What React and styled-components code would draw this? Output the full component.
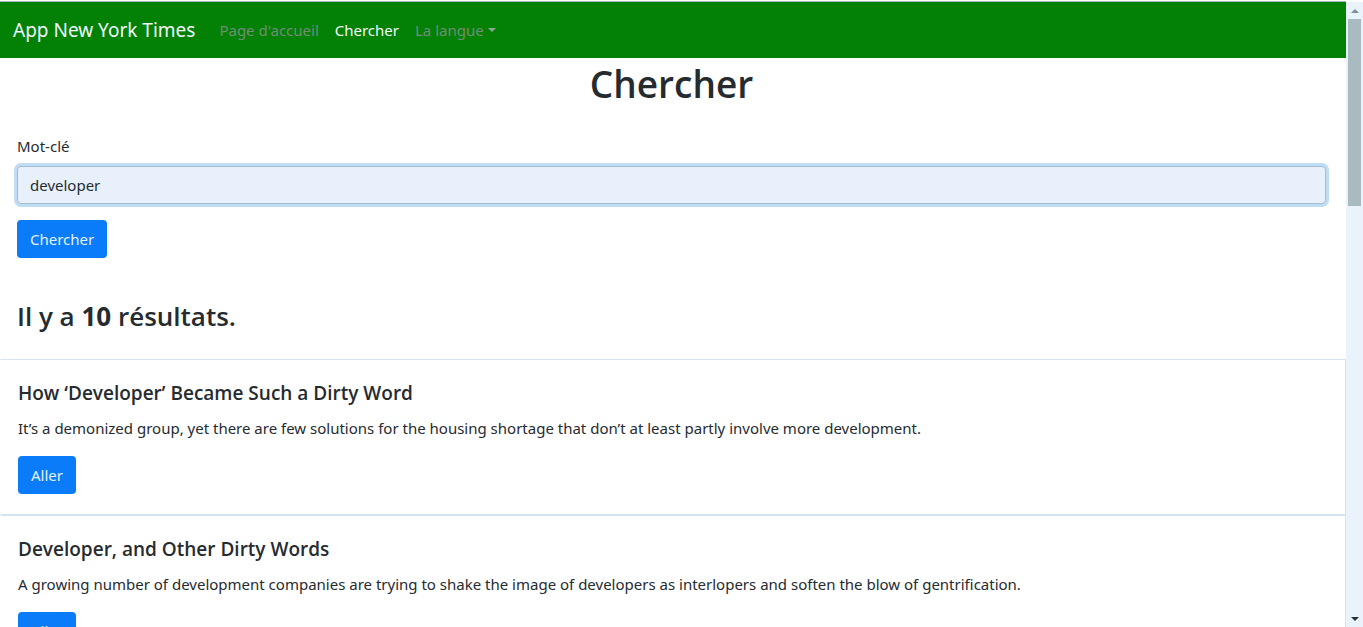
import React from "react";
import styled, { createGlobalStyle } from "styled-components";

const GlobalStyle = createGlobalStyle`
  *, *::before, *::after { box-sizing: border-box; }
  body {
    margin: 0;
    background: #fff;
    color: #262b2f;
    font-family: "Noto Sans", "Open Sans", sans-serif;
    font-size: 15px;
    line-height: 24px;
  }
  h1, h2, h3, p, ul { margin: 0; padding: 0; }
  h1, h2, h3 {
    font-family: "Open Sans", "Noto Sans", sans-serif;
    font-weight: 600;
  }
`;

const Shell = styled.div`
  display: grid;
  grid-template-columns: minmax(0, 1fr) 17px;
  height: 100vh;
  overflow: hidden;
  padding-top: 1px;
`;

const Page = styled.div`
  min-width: 0;
  overflow: hidden;
  border-top: 1px solid #a9b9bd;
`;

const Navbar = styled.nav`
  display: flex;
  align-items: center;
  height: 56px;
  padding: 0 13px;
  background: #028105;
`;

const Brand = styled.a`
  margin-right: 16px;
  color: #f0f6fb;
  font-size: 19px;
  line-height: 30px;
  text-decoration: none;
`;

const NavList = styled.ul`
  display: flex;
  list-style: none;
`;

const NavLink = styled.a`
  display: flex;
  align-items: center;
  padding: 8px;
  color: ${(p) => (p.$active ? "#f4f9fc" : "#728c76")};
  text-decoration: none;
`;

const Caret = styled.span`
  margin-left: 4px;
  border-top: 4px solid #8fa595;
  border-left: 4px solid transparent;
  border-right: 4px solid transparent;
`;

const Search = styled.section`
  padding: 0 20px 0 17px;
`;

const PageTitle = styled.h1`
  margin-bottom: 24px;
  font-size: 37px;
  line-height: 52px;
  text-align: center;
`;

const Form = styled.form`
  display: flex;
  flex-direction: column;
  align-items: flex-start;
`;

const Label = styled.label`
  margin-bottom: 8px;
`;

const TextInput = styled.input`
  width: 100%;
  height: 38px;
  margin-bottom: 16px;
  padding: 6px 12px;
  border: 1px solid #a5bccb;
  border-radius: 4px;
  outline: none;
  background: #e8f1fb;
  box-shadow: 0 0 0 3px #c0ddf6;
  color: inherit;
  font: inherit;
`;

const Button = styled.button`
  height: 38px;
  padding: 0 13px;
  border: 0;
  border-radius: 4px;
  background: #0a7cf9;
  color: #e4f1fd;
  font: inherit;
  cursor: pointer;
`;

const ResultCount = styled.h2`
  margin: 41px 0 26px;
  font-size: 26px;
  line-height: 34px;

  strong { font-weight: 700; }
`;

const Card = styled.article`
  display: flex;
  flex-direction: column;
  align-items: flex-start;
  padding: 20px 17px;
  border: 1px solid #d5e4f1;
  border-left-color: #fff;
`;

const CardTitle = styled.h3`
  margin-bottom: 10px;
  font-size: 19px;
  line-height: 26px;
`;

const CardText = styled.p`
  margin-bottom: 16px;
`;

const Scrollbar = styled.div`
  display: flex;
  flex-direction: column;
  align-items: center;
  margin-top: 1px;
  background: #eaf2fb;
`;

const Arrow = styled.span`
  display: flex;
  align-items: center;
  justify-content: center;
  flex: none;
  width: 17px;
  height: 17px;

  &::before {
    content: "";
    border-left: 4px solid transparent;
    border-right: 4px solid transparent;
    ${(p) => (p.$up ? "border-bottom: 4px solid #7f9190;" : "border-top: 4px solid #2b3133;")}
  }
`;

const Track = styled.div`
  display: grid;
  grid-template-rows: 6fr 13fr;
  flex: 1;
  width: 13px;
`;

const Thumb = styled.div`
  background: #a9bbc1;
`;

const articles = [
  {
    title: "How ‘Developer’ Became Such a Dirty Word",
    text: "It’s a demonized group, yet there are few solutions for the housing shortage that don’t at least partly involve more development.",
  },
  {
    title: "Developer, and Other Dirty Words",
    text: "A growing number of development companies are trying to shake the image of developers as interlopers and soften the blow of gentrification.",
  },
];

export default function App() {
  return (
    <Shell>
      <GlobalStyle />
      <Page>
        <Navbar>
          <Brand href="#">App New York Times</Brand>
          <NavList>
            <li><NavLink href="#accueil">Page d'accueil</NavLink></li>
            <li><NavLink href="#chercher" $active>Chercher</NavLink></li>
            <li><NavLink href="#langue">La langue<Caret /></NavLink></li>
          </NavList>
        </Navbar>
        <main>
          <Search>
            <PageTitle>Chercher</PageTitle>
            <Form onSubmit={(e) => e.preventDefault()}>
              <Label htmlFor="keyword">Mot-clé</Label>
              <TextInput id="keyword" type="text" defaultValue="developer" />
              <Button type="submit">Chercher</Button>
            </Form>
            <ResultCount>Il y a <strong>10</strong> résultats.</ResultCount>
          </Search>
          {articles.map((a) => (
            <Card key={a.title}>
              <CardTitle>{a.title}</CardTitle>
              <CardText>{a.text}</CardText>
              <Button type="button">Aller</Button>
            </Card>
          ))}
        </main>
      </Page>
      <Scrollbar aria-hidden="true">
        <Arrow $up />
        <Track><Thumb /></Track>
        <Arrow />
      </Scrollbar>
    </Shell>
  );
}
